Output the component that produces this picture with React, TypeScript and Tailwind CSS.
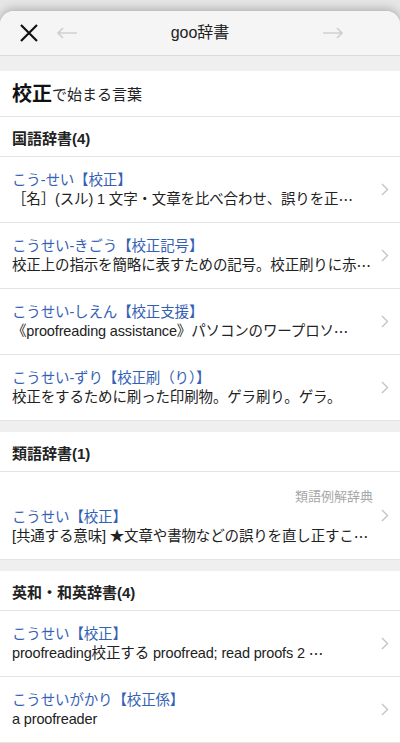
const font = {
  fontFamily: '"Liberation Sans", "Noto Sans CJK JP", sans-serif',
};

type Entry = {
  title: string;
  body: string;
  source?: string;
};

const sections: { name: string; entries: Entry[] }[] = [
  {
    name: "国語辞書(4)",
    entries: [
      { title: "こう-せい【校正】", body: "［名］(スル) 1 文字・文章を比べ合わせ、誤りを正…" },
      { title: "こうせい-きごう【校正記号】", body: "校正上の指示を簡略に表すための記号。校正刷りに赤…" },
      { title: "こうせい-しえん【校正支援】", body: "《proofreading assistance》パソコンのワープロソ…" },
      { title: "こうせい-ずり【校正刷（り）】", body: "校正をするために刷った印刷物。ゲラ刷り。ゲラ。" },
    ],
  },
  {
    name: "類語辞書(1)",
    entries: [
      {
        title: "こうせい【校正】",
        body: "[共通する意味] ★文章や書物などの誤りを直し正すこ…",
        source: "類語例解辞典",
      },
    ],
  },
  {
    name: "英和・和英辞書(4)",
    entries: [
      { title: "こうせい【校正】", body: "proofreading校正する proofread; read proofs 2 …" },
      { title: "こうせいがかり【校正係】", body: "a proofreader" },
    ],
  },
];

function Chevron() {
  return (
    <svg width="8" height="13" viewBox="0 0 8 13" className="shrink-0">
      <path d="M1 1l5.5 5.5L1 12" fill="none" stroke="#c4c4c4" strokeWidth="1.4" />
    </svg>
  );
}

// ellipsis drawn by the CJK face so it sits mid-line like the reference
function Body({ text }: { text: string }) {
  const cut = text.endsWith("…");
  const main = cut ? text.slice(0, -1) : text;
  return (
    <>
      {main}
      {cut && (
        <span
          className="inline-block h-[19px] align-top leading-[19px]"
          style={{ fontFamily: '"Noto Sans CJK JP", sans-serif' }}
        >
          …
        </span>
      )}
    </>
  );
}

function Row({ entry }: { entry: Entry }) {
  return (
    <div className="flex items-center border-b border-[#e4e4e4] bg-white pl-3 pr-[11px]">
      <div
        className={
          "min-w-0 flex-1 pr-[6px] " + (entry.source ? "pt-[16px] pb-[13px]" : "pt-[14px] pb-[13px]")
        }
      >
        {entry.source && (
          <div className="mr-[2px] text-right text-[13px] leading-[18px] text-[#a8a8a8]">
            {entry.source}
          </div>
        )}
        <div
          className={
            "overflow-hidden whitespace-nowrap text-[14.5px] leading-[19px] tracking-[-0.15px] text-[#3461b4] " +
            (entry.source ? "mt-[2px]" : "")
          }
        >
          {entry.title}
        </div>
        <div className="h-[19px] overflow-hidden whitespace-nowrap text-[14.5px] leading-[19px] tracking-[-0.15px] text-[#222]">
          <Body text={entry.body} />
        </div>
      </div>
      <Chevron />
    </div>
  );
}

export default function App() {
  return (
    <div style={font} className="h-[743px] w-[400px] overflow-hidden bg-[#e6e6e6] pt-[11px]">
      <div className="overflow-hidden rounded-t-[14px] bg-[#efefef] shadow-[0_-2px_10px_rgba(0,0,0,0.25)]">
        <div className="flex h-[45px] items-center border-b border-[#dcdcdc] bg-[#f5f5f5] px-[19px]">
          <svg width="20" height="20" viewBox="0 0 20 20">
            <path d="M2 2l16 16M18 2L2 18" stroke="#111" strokeWidth="2.2" fill="none" />
          </svg>
          <svg width="22" height="12" viewBox="0 0 22 12" className="ml-[17px]">
            <path d="M21 6H2M7 1L2 6l5 5" stroke="#cfcfcf" strokeWidth="1.6" fill="none" />
          </svg>
          <div className="flex-1 text-center text-[16px] text-[#222]">goo辞書</div>
          <svg width="22" height="12" viewBox="0 0 22 12" className="mr-[37px]">
            <path d="M1 6h19M15 1l5 5-5 5" stroke="#cfcfcf" strokeWidth="1.6" fill="none" />
          </svg>
        </div>

        <div className="h-[15px]" />

        <div className="flex h-[46px] items-end border-b border-[#e4e4e4] bg-white px-3 pb-[9px]">
          <span className="text-[20px] font-bold leading-[26px] text-[#111]">校正</span>
          <span className="text-[15px] leading-[24px] text-[#222]">で始まる言葉</span>
        </div>

        {sections.map((s, i) => (
          <div key={s.name} className={i > 0 ? "mt-[11px]" : ""}>
            <div className="border-b border-[#e4e4e4] bg-white px-3 pt-[13px] pb-[8px] text-[15px] font-bold leading-[18px] text-[#222]">
              {s.name}
            </div>
            {s.entries.map((e) => (
              <Row key={e.title} entry={e} />
            ))}
          </div>
        ))}
      </div>
    </div>
  );
}
